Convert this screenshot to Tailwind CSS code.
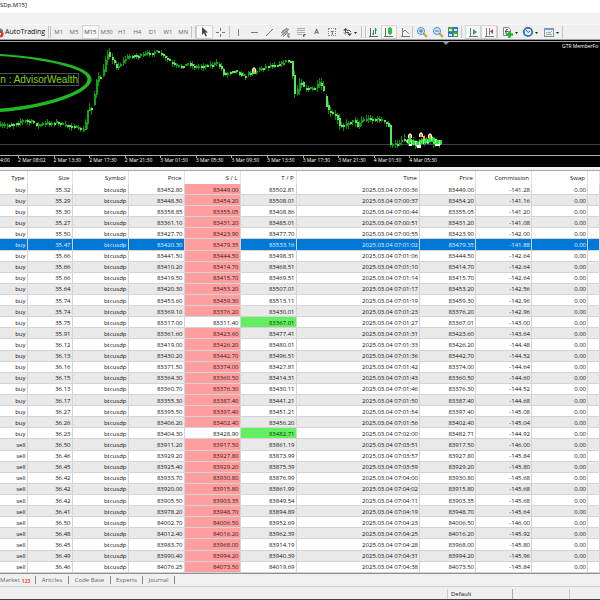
<!DOCTYPE html>
<html lang="en">
<head>
    <meta charset="UTF-8">
    <meta name="viewport" content="width=device-width, initial-scale=1.0">
    <title>Trading Terminal</title>
    <script src="https://cdn.jsdelivr.net/npm/@tailwindcss/browser@4"></script>
</head>
<body class="h-screen flex flex-col overflow-hidden bg-[#f0f0f0] font-['Open_Sans','Noto_Sans',sans-serif] text-[6px] leading-[8px] text-[#111]">
    <!-- Title bar -->
    <header class="h-[13px] shrink-0 bg-white">
        <h1 class="w-[27px] pt-px flex justify-end whitespace-nowrap">SDp,M15]</h1>
    </header>
    <div class="h-[12px] shrink-0 border-b border-[#f8f8f8]"></div>

    <!-- Toolbar -->
    <div class="h-[15px] shrink-0 flex items-stretch overflow-hidden border-b border-[#a0a0a0] text-[#666]">
        <button class="w-[48px] flex items-center gap-px overflow-hidden whitespace-nowrap text-[7px] text-[#111]">
            <svg class="w-[4px] h-[12px] shrink-0" viewBox="0 0 4 12"><path d="M0 2l3 2v3H0z" fill="#4a86c8"/><circle cx="0" cy="8" r="3.6" fill="#d8402c"/><path d="M0 7h1v2H0z" fill="#fff"/></svg>AutoTrading
        </button>
        <div class="w-[3px] my-px border-x border-[#c4c4c4]"></div>
        <div class="w-[140px] flex">
            <button class="flex-1">M1</button>
            <button class="flex-1">M5</button>
            <button class="flex-1 bg-[#f8f8f8] border border-[#d4d4d4] text-[#444]">M15</button>
            <button class="flex-1">M30</button>
            <button class="flex-1">H1</button>
            <button class="flex-1">H4</button>
            <button class="flex-1">D1</button>
            <button class="flex-1">W1</button>
            <button class="flex-1">MN</button>
        </div>
        <div class="w-[5px] my-px border-x border-[#c4c4c4]"></div>
        <div class="w-[32px] flex">
            <button class="flex-1 grid place-items-center bg-[#f8f8f8] border border-[#d4d4d4]" aria-label="Cursor"><svg class="size-[12px]" viewBox="0 0 12 12"><path d="M3 1v8l2-2 1.500 3.500 1.400-.7L6.400 6.500H9z" fill="#444"/></svg></button>
            <button class="flex-1 grid place-items-center" aria-label="Crosshair"><svg class="size-[12px]" viewBox="0 0 12 12"><path d="M5.500 2v3M5.500 8v3M1 6.500h3M7 6.500h3" stroke="#777" fill="none"/></svg></button>
        </div>
        <div class="w-[2px] my-px border-r border-[#c4c4c4]"></div>
        <div class="w-[110px] flex">
            <button class="flex-1 grid place-items-center" aria-label="Vertical line"><svg class="size-[12px]" viewBox="0 0 12 12"><path d="M6.500 3v7" stroke="#888"/></svg></button>
            <button class="flex-1 grid place-items-center" aria-label="Horizontal line"><svg class="size-[12px]" viewBox="0 0 12 12"><path d="M3 6.500h7" stroke="#777"/></svg></button>
            <button class="flex-1 grid place-items-center" aria-label="Trendline"><svg class="size-[12px]" viewBox="0 0 12 12"><path d="M3 10l7-7" stroke="#777"/></svg></button>
            <button class="flex-1 grid place-items-center" aria-label="Channel"><svg class="size-[12px]" viewBox="0 0 12 12"><path d="M2 7l6-5M2 10l8-7M4 10.500l5-4M4 4v5M6 3v5M8 2v5" stroke="#666" stroke-width=".8"/><path d="M11 8H9v3h2" stroke="#444" stroke-width=".8" fill="none"/></svg></button>
            <button class="flex-1 grid place-items-center" aria-label="Fibonacci"><svg class="size-[12px]" viewBox="0 0 12 12"><path d="M2 2.500h8M2 4.500h8M2 6.500h8M2 8.500h5" stroke="#999" stroke-width=".8"/><path d="M8.500 11V8.500H11M8.500 10H10" stroke="#444" stroke-width=".8" fill="none"/></svg></button>
            <button class="flex-1 font-semibold text-[7px] text-[#555]">A</button>
            <button class="flex-1 grid place-items-center" aria-label="Text label"><span class="size-[8px] border border-dotted border-[#888] grid place-items-center font-bold">T</span></button>
        </div>
        <button class="w-[20px] flex items-center justify-center" aria-label="Arrows"><svg class="w-[16px] h-[12px]" viewBox="0 0 16 12"><path d="M3.500 2L6 4.500H1zM7.500 10L5 7.500h5z" fill="#444"/><path d="M3.500 4v2.500H7M4 8.500l-2-2M5 5l2-1 2 2" stroke="#555" fill="none"/><path d="M12 6h3l-1.500 2z" fill="#222"/></svg></button>
        <div class="w-[6px] my-px pl-px"><div class="h-full border-x border-[#c4c4c4]"></div></div>
        <div class="w-[46px] flex">
            <button class="flex-1 grid place-items-center" aria-label="Bar chart"><svg class="size-[12px]" viewBox="0 0 12 12"><path d="M3.500 2v8.500M2 10.500h9" stroke="#666" fill="none"/><path d="M6.500 4v5M5 8h1.500M8.500 2v6M8.500 4H10" stroke="#1a9a32" fill="none"/></svg></button>
            <button class="flex-1 grid place-items-center bg-[#f8f8f8] border border-[#d4d4d4]" aria-label="Candlesticks"><svg class="size-[12px]" viewBox="0 0 12 12"><path d="M2.500 2v8.500M1 10.500h9" stroke="#666" fill="none"/><path d="M7 1v8" stroke="#128a2a"/><rect x="5" y="2" width="4" height="6" rx="1" fill="#24c440"/></svg></button>
            <button class="flex-1 grid place-items-center" aria-label="Line chart"><svg class="size-[12px]" viewBox="0 0 12 12"><path d="M3.500 2v8.500M2 10.500h9" stroke="#777" fill="none"/><path d="M3 7l3-3 4 4" stroke="#4aa85c" fill="none"/></svg></button>
        </div>
        <div class="w-[2px] my-px border-l border-[#c4c4c4]"></div>
        <div class="w-[47px] flex">
            <button class="flex-1 grid place-items-center" aria-label="Zoom in"><svg class="size-[12px]" viewBox="0 0 12 12"><path d="M7 7l4 4" stroke="#d0a030" stroke-width="2"/><circle cx="5" cy="5" r="3.500" fill="#d4ebfc" stroke="#4590cc"/><path d="M3 5h4M5 3v4" stroke="#2878bc"/></svg></button>
            <button class="flex-1 grid place-items-center" aria-label="Zoom out"><svg class="size-[12px]" viewBox="0 0 12 12"><path d="M7 7l4 4" stroke="#d0a030" stroke-width="2"/><circle cx="5" cy="5" r="3.500" fill="#d4ebfc" stroke="#4590cc"/><path d="M3 5h4" stroke="#2878bc"/></svg></button>
            <button class="flex-1 grid place-items-center" aria-label="Tile windows"><svg class="size-[12px]" viewBox="0 0 12 12"><path d="M1 1h5v5H1zM6 6h5v5H6z" fill="#4da43c"/><path d="M6 1h5v5H6zM1 6h5v5H1z" fill="#3474c0"/><path d="M2 3h3v2H2zM7 3h3v2H7zM2 8h3v2H2zM7 8h3v2H7z" fill="#dcecf8"/></svg></button>
        </div>
        <div class="w-[4px] my-px border-l border-[#c4c4c4]"></div>
        <div class="w-[32px] flex">
            <button class="flex-1 grid place-items-center bg-[#f8f8f8] border border-[#d4d4d4]" aria-label="Auto scroll"><svg class="size-[12px]" viewBox="0 0 12 12"><path d="M3.500 2v8.500M2 10.500h9" stroke="#777" fill="none"/><path d="M6 3l4 3-4 3z" fill="#35a548"/></svg></button>
            <button class="flex-1 grid place-items-center bg-[#f8f8f8] border border-[#d4d4d4]" aria-label="Chart shift"><svg class="size-[12px]" viewBox="0 0 12 12"><path d="M3.500 2v8.500M2 10.500h9M6.500 2v7" stroke="#777" fill="none"/><path d="M10 3L7 5.500 10 8z" fill="#b4453a"/></svg></button>
        </div>
        <div class="w-[2px] my-px border-l border-[#c4c4c4]"></div>
        <div class="w-[63px] flex">
            <button class="flex-1 flex items-center justify-center" aria-label="Indicators"><svg class="w-[18px] h-[12px]" viewBox="0 0 18 12"><path d="M2.500 1.500h5l2 2v6h-7z" fill="#f8f8f8" stroke="#888"/><path d="M5 8V4l2-1M4 5.500h3" stroke="#555" fill="none"/><path d="M5 8.500h7M8.500 5v7" stroke="#1cb42c" stroke-width="2.400"/><path d="M14 6h3l-1.500 2z" fill="#222"/></svg></button>
            <button class="flex-1 flex items-center justify-center" aria-label="Periods"><svg class="w-[18px] h-[12px]" viewBox="0 0 18 12"><circle cx="6" cy="6" r="4.200" fill="#e6f2fc" stroke="#2a6dc0" stroke-width="1.800"/><path d="M4 4l2 2.500L8 5" stroke="#555" fill="none"/><path d="M13 6h3l-1.500 2z" fill="#222"/></svg></button>
            <button class="flex-1 flex items-center justify-center" aria-label="Templates"><svg class="w-[18px] h-[12px]" viewBox="0 0 18 12"><rect x="1.500" y="2.500" width="9" height="8" fill="#f4f8fc" stroke="#7a94b0"/><path d="M1 3h10" stroke="#6c9cd0" stroke-width="2"/><path d="M3 7l2-1 2 1 2-2" stroke="#b07050" fill="none" stroke-width=".8"/><path d="M3 9l3-1 3 1" stroke="#58a058" fill="none" stroke-width=".8"/><path d="M13 6h3l-1.500 2z" fill="#222"/></svg></button>
        </div>
        <div class="w-px my-px bg-[#c4c4c4]"></div>
    </div>

    <!-- Chart -->
    <main class="h-[127px] shrink-0 bg-black text-white relative overflow-hidden">
        <svg class="block w-full h-[116px]" id="chart">
            <line x1="0" y1="1.500" x2="100%" y2="1.500" stroke="#a8a8a8"/>
            <line x1="0" y1="104.500" x2="100%" y2="104.500" stroke="#39424e"/>
            <path d="M443 2h6l-3 3z" fill="#8094a4"/>
            <g id="candles" shape-rendering="crispEdges"></g>
            <path d="M0 14C40 16.500 91.500 25 91.500 39C91.500 55 40 69.500 0 72V68.500C40 66 87.500 52 87.500 39C87.500 28 40 18.500 0 16z" fill="#22b822"/>
            <g id="trades"></g>
            <line x1="0" y1="115.500" x2="100%" y2="115.500" stroke="#b0b0b0"/>
        </svg>
        <div class="flex text-[5px] leading-[9px] whitespace-nowrap">
            <div class="w-[18px] shrink-0">4:00</div>
            <div class="w-[427px] flex" id="axis"></div>
        </div>
        <div class="absolute left-0 top-[33px] w-[79px] h-[13px] flex items-center justify-end whitespace-nowrap border-y border-r border-[#4a4f58] font-['Liberation_Sans',sans-serif] text-[10px] text-[#84d60c]">n : AdvisorWealth</div>
        <div class="absolute left-[562px] top-[2px] text-[5px] whitespace-nowrap">GTR MemberFo</div>
    </main>
    <div class="h-[4px] shrink-0 border-b border-[#a8a8a8]"></div>

    <!-- Account history -->
    <section class="flex-1 min-h-0 bg-white border-b border-[#909090]">
        <table class="w-full h-full table-fixed border-collapse text-right whitespace-nowrap">
            <colgroup>
                <col class="w-[27px]"><col class="w-[45px]"><col class="w-[56px]"><col class="w-[56px]"><col class="w-[56px]"><col class="w-[56px]">
                <col><col class="w-[56px]"><col class="w-[56px]"><col class="w-[56px]"><col class="w-[12px]">
            </colgroup>
            <thead>
                <tr class="h-[13px] text-[#111] *:font-normal *:pr-[2px] *:border-r *:border-[#e4e4e4]">
                    <th>Type</th><th>Size</th><th>Symbol</th><th>Price</th><th>S / L</th><th>T / P</th><th>Time</th><th>Price</th><th>Commission</th><th>Swap</th><td></td>
                </tr>
            </thead>
            <tbody id="deals"></tbody>
        </table>
    </section>

    <!-- Tabs -->
    <nav class="h-[13px] shrink-0 flex items-center overflow-hidden border-b border-[#d0d0d0] text-[#666] *:h-[8px] *:border-r *:border-[#888]">
        <a href="#" class="w-[36px]">Market<sub class="pl-[2px] text-[5px] font-bold text-[#f04830]">123</sub></a>
        <a href="#" class="w-[33px] text-center">Articles</a>
        <a href="#" class="w-[42px] text-center">Code Base</a>
        <a href="#" class="w-[32px] text-center">Experts</a>
        <a href="#" class="w-[32px] text-center">Journal</a>
    </nav>

    <!-- Status bar -->
    <footer class="h-[13px] shrink-0 flex items-end border-b border-[#444]">
        <div class="flex-1 h-[10px] border-r border-[#ccc]"></div>
        <div class="w-[65px] h-[10px] pl-[3px] pt-px border-r border-[#aaa]">Default</div>
        <div class="w-[57px] h-[10px] border-r border-[#ccc]"></div>
        <div class="w-[30px]"></div>
    </footer>

    <script>
        // type, size, open price, s/l, t/p, close time, close price, commission
        const deals = `buy 35.32 83452.80 83449.00 83502.81 07:00:36 83449.00 -141.28
buy 35.29 83448.50 83454.20 83508.01 07:00:37 83454.20 -141.16
buy 35.30 83358.85 83355.05 83408.86 07:00:44 83355.05 -141.20
buy 35.27 83361.10 83431.20 83485.01 07:00:51 83431.20 -141.08
buy 35.50 83427.70 83423.90 83477.70 07:00:55 83423.90 -142.00
buy 35.47 83420.30 83479.35 83533.16 07:01:02 83479.35 -141.88
buy 35.66 83441.50 83444.50 83498.31 07:01:06 83444.50 -142.64
buy 35.66 83410.20 83414.70 83468.51 07:01:10 83414.70 -142.64
buy 35.66 83419.50 83415.70 83469.51 07:01:14 83415.70 -142.64
buy 35.64 83420.30 83453.20 83507.01 07:01:17 83453.20 -142.56
buy 35.74 83453.60 83459.30 83513.11 07:01:19 83459.30 -142.96
buy 35.74 83369.10 83376.20 83430.01 07:01:23 83376.20 -142.96
buy 35.75 83317.00 83311.40 83367.01 07:01:27 83367.01 -143.00
buy 35.91 83361.60 83423.60 83477.41 07:01:31 83423.60 -143.64
buy 36.12 83419.00 83426.20 83480.01 07:01:33 83426.20 -144.48
buy 36.13 83430.20 83442.70 83496.51 07:01:36 83442.70 -144.52
buy 36.16 83371.50 83374.00 83427.81 07:01:42 83374.00 -144.64
buy 36.15 83364.30 83360.50 83414.31 07:01:43 83360.50 -144.60
buy 36.13 83360.70 83376.30 83430.11 07:01:46 83376.30 -144.52
buy 36.17 83355.30 83387.40 83441.21 07:01:50 83387.40 -144.68
buy 36.27 83395.50 83397.40 83451.21 07:01:54 83397.40 -145.08
buy 36.26 83406.20 83402.40 83456.20 07:01:56 83402.40 -145.04
buy 36.23 83404.30 83428.90 83482.71 07:02:00 83482.71 -144.92
sell 36.50 83911.20 83917.50 83861.19 07:03:51 83917.50 -146.00
sell 36.46 83929.20 83927.80 83873.99 07:03:57 83927.80 -145.84
sell 36.45 83925.40 83929.20 83875.39 07:03:59 83929.20 -145.80
sell 36.42 83933.70 83930.80 83876.99 07:04:00 83930.80 -145.68
sell 36.42 83920.00 83915.80 83861.99 07:04:02 83915.80 -145.68
sell 36.42 83905.50 83903.35 83849.54 07:04:11 83903.35 -145.68
sell 36.41 83978.20 83948.70 83894.89 07:04:19 83948.70 -145.64
sell 36.50 84002.70 84006.50 83952.69 07:04:23 84006.50 -146.00
sell 36.48 84012.40 84016.20 83962.39 07:04:25 84016.20 -145.92
sell 36.45 83983.70 83968.00 83914.19 07:04:28 83968.00 -145.80
sell 36.49 83990.40 83994.20 83940.39 07:04:31 83994.20 -145.96
sell 36.46 84076.25 84073.50 84019.69 07:04:38 84073.50 -145.84`.split('\n').map(l => l.split(' '));
        const selected = 5;

        document.getElementById('deals').innerHTML = deals.map((d, i) => {
            const [type, size, open, sl, tp, time, close, commission] = d;
            const row = i === selected ? 'bg-[#0078d7] text-[#e4f2ff]' : i % 2 ? 'bg-[#e9e9e9]' : 'bg-white';
            const slHit = close === sl ? 'bg-[#ff9e9e] text-[#3a1414]' : '';
            const tpHit = close === tp ? 'bg-[#62f062] text-[#083808]' : '';
            return `<tr class="${row} border-b border-[#d4d4d4] *:p-0 *:pt-px *:pr-px *:border-r *:border-[#d4d4d4]">
                <td>${type}</td><td>${size}</td><td>btcusdp</td><td>${open}</td>
                <td class="${slHit}">${sl}</td><td class="${tpHit}">${tp}</td>
                <td>2025.03.04 ${time}</td><td>${close}</td><td>${commission}</td><td>0.00</td><td></td></tr>`;
        }).join('');

        document.getElementById('axis').innerHTML = ['2 Mar 08:02', '2 Mar 13:30', '2 Mar 17:30', '2 Mar 21:30', '3 Mar 01:30', '3 Mar 05:30',
            '3 Mar 09:30', '3 Mar 13:30', '3 Mar 17:30', '3 Mar 21:30', '4 Mar 01:30', '4 Mar 05:30']
            .map(t => `<div class="flex-1 min-w-0"><div class="w-px h-[2px] -mb-[2px] bg-[#b0b0b0]"></div>${t}</div>`).join('');

        // price path, x then y
        const path = [[0,85],[8,85],[18,83],[24,80],[33,81],[38,85],[50,83],[58,82],[68,85],[78,87],[82,89],[86,90],[88,78],[90,65],[92,70],[95,62],
            [97,48],[99,36],[102,39],[105,32],[107,20],[109,12],[112,17],[115,22],[118,27],[122,24],[128,18],[134,15],[142,16],[150,13],[158,11],[164,15],
            [170,20],[176,25],[184,26],[190,23],[196,27],[200,26],[210,25],[218,23],[222,27],[226,35],[230,32],[236,30],[242,34],[246,36],[252,32],[256,32],
            [262,28],[272,25],[282,24],[288,20],[292,21],[294,35],[296,54],[298,55],[300,46],[302,40],[306,48],[312,48],[318,48],[321,43],[324,48],[327,60],
            [329,70],[334,73],[338,75],[341,85],[346,86],[350,82],[356,80],[359,87],[362,81],[368,78],[376,79],[384,80],[390,85],[392,104],[394,105],
            [400,103],[404,99],[410,101],[416,104],[421,101],[430,99],[436,102],[442,103]];
        const priceAt = x => {
            const i = Math.max(1, path.findIndex(p => p[0] >= x));
            const [a, b] = [path[i - 1], path[i]];
            return a[1] + (b[1] - a[1]) * (x - a[0]) / (b[0] - a[0]);
        };
        let candles = '';
        let seed = 7;
        const rand = () => (seed = seed * 16807 % 2147483647) / 2147483647;
        for (let t = 0; t < 440; t += 2.23) {
            const x = Math.round(t);
            const o = priceAt(x), c = priceAt(Math.min(x + 2.23, 441)) + rand() * 3 - 1.5;
            const top = Math.round(Math.min(o, c)), h = Math.max(2, Math.round(Math.abs(c - o)));
            const volatile = x > 290 || (x > 85 && x < 120) ? 5 : 3;
            const up = Math.round(rand() * volatile), down = Math.round(rand() * volatile);
            candles += `<rect x="${x}" y="${top - up}" width="1" height="${h + up + down}" fill="#0a8c0a"/>
                <rect x="${x}" y="${top}" width="2" height="${h}" fill="${c > o ? '#58e858' : '#0aa80a'}"/>`;
        }
        document.getElementById('candles').innerHTML = candles;

        // order arrows on the latest bars and one earlier trade
        let trades = '';
        for (let i = 0; i < 34; i++) {
            const x = 407 + i;
            trades += `<rect x="${x}" y="${priceAt(x) + rand() * 3 - 3}" width="2" height="4" fill="${i % 4 ? '#20ee30' : '#c8ffc8'}"/>`;
        }
        for (const [x, y] of [[254, 28], [410, 94], [421, 93], [430, 94]]) {
            trades += `<path d="M${x - 2} ${y + 4}v-3l2-2 2 2v3z" fill="#f8f4e8"/><rect x="${x - 1}" y="${y + 1}" width="2" height="3" fill="#f09020"/>`;
        }
        trades += '<path d="M409 104h3v2h-3zM416 105h5v3h-4zM435 104h5v2h-5z" fill="#fff"/><path d="M423 96h2v4h-2z" fill="#ffb400"/><path d="M424 103h1v2h-1zM413 97h1v1h-1z" fill="#3060e0"/>';
        document.getElementById('trades').innerHTML = trades;
    </script>
</body>
</html>
